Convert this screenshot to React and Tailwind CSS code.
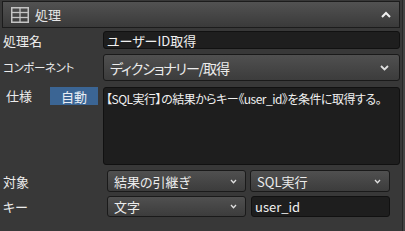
import React from 'react';

const Chevron = ({ small = false }) => (
  <svg width={small ? 7 : 9} height={small ? 5 : 6} viewBox={small ? '0 0 7 5' : '0 0 9 6'}>
    <polyline
      points={small ? '1,1 3.5,3.8 6,1' : '1,1 4.5,4.5 8,1'}
      fill="none"
      stroke="#e0e0e0"
      strokeWidth={small ? 1.3 : 1.8}
    />
  </svg>
);

const Select = ({ children, className = '', small = false }) => (
  <div
    className={`flex items-center justify-between rounded-[3px] border border-[#1a1a1a] bg-gradient-to-b from-[#505050] to-[#3c3c3c] pl-[6px] text-[#ececec] ${className}`}
  >
    <span className="leading-none whitespace-nowrap">{children}</span>
    <Chevron small={small} />
  </div>
);

const App = () => {
  return (
    <div className="w-[405px] h-[231px] overflow-hidden bg-[#444] font-['Noto_Sans_CJK_JP','Noto_Sans',sans-serif] [font-feature-settings:'palt']">
      <div className="w-[403px] h-[231px] bg-[#383838] border-r border-[#262626] flex flex-col">
        {/* Header */}
        <div className="mx-[2px] mt-[1px] h-[27px] border border-[#1c1c1c] bg-gradient-to-b from-[#525252] to-[#3a3a3a] flex items-center pl-[8px] pr-[8px]">
          <svg width="18" height="16" viewBox="0 0 18 16" className="mr-[6px]">
            <rect x="0.75" y="0.75" width="16.5" height="14.5" fill="none" stroke="#c4c4c4" strokeWidth="1.5" />
            <line x1="0.5" y1="5.5" x2="17.5" y2="5.5" stroke="#c4c4c4" strokeWidth="1.3" />
            <line x1="0.5" y1="10.5" x2="17.5" y2="10.5" stroke="#c4c4c4" strokeWidth="1.3" />
            <line x1="9" y1="0.5" x2="9" y2="15.5" stroke="#c4c4c4" strokeWidth="1.3" />
          </svg>
          <span className="text-[13px] text-[#e6e6e6] leading-none">処理</span>
          <svg width="10" height="7" viewBox="0 0 10 7" className="ml-auto">
            <polyline points="1,6 5,2 9,6" fill="none" stroke="#f0f0f0" strokeWidth="2" />
          </svg>
        </div>

        {/* 処理名 */}
        <div className="flex items-center mt-[3px] pl-[3px] h-[18px]">
          <span className="w-[100px] text-[13px] text-[#ececec] leading-none">処理名</span>
          <div className="w-[297px] h-[18px] rounded-[3px] border border-[#111] bg-[#1e1e1e] flex items-center px-[3px] text-[13px] text-[#f0f0f0] leading-none">
            ユーザーID取得
          </div>
        </div>

        {/* コンポーネント */}
        <div className="flex items-center mt-[5px] pl-[3px] h-[27px]">
          <span className="w-[100px] text-[11.5px] tracking-[-0.4px] text-[#ececec] leading-none whitespace-nowrap">コンポーネント</span>
          <Select className="w-[297px] h-[27px] text-[14px] tracking-[-1.1px] pr-[10px]">ディクショナリー/取得</Select>
        </div>

        {/* 仕様 */}
        <div className="flex items-start mt-[6px] pl-[6px] h-[78px]">
          <span className="w-[44px] text-[13px] text-[#ececec] leading-[18px]">仕様</span>
          <div className="w-[48px] h-[18px] bg-[#3b6594] flex items-center justify-center text-[13px] text-[#e8eef5] leading-none">
            自動
          </div>
          <div className="ml-[5px] w-[297px] h-[78px] rounded-[3px] border border-[#111] bg-[#1e1e1e] pl-[2px] pt-[3px] text-[12px] tracking-[-0.5px] text-[#f0f0f0] leading-[16px] whitespace-nowrap overflow-hidden">
            【SQL実行】の結果からキー《user_id》を条件に取得する。
          </div>
        </div>

        {/* 対象 */}
        <div className="flex items-center mt-[5px] pl-[3px] h-[22px]">
          <span className="w-[104px] text-[13px] text-[#ececec] leading-none">対象</span>
          <Select small className="w-[139px] h-[22px] text-[13px] pr-[8px]">結果の引継ぎ</Select>
          <Select small className="ml-[4px] w-[140px] h-[22px] text-[13px] pr-[8px]">SQL実行</Select>
        </div>

        {/* キー */}
        <div className="flex items-center mt-[4px] pl-[3px] h-[21px]">
          <span className="w-[104px] text-[13px] text-[#ececec] leading-none">キー</span>
          <Select small className="w-[139px] h-[21px] text-[13px] pr-[8px]">文字</Select>
          <div className="ml-[5px] w-[139px] h-[21px] rounded-[3px] border border-[#111] bg-[#1e1e1e] flex items-center px-[3px] text-[13px] text-[#f0f0f0] leading-none">
            user_id
          </div>
        </div>
      </div>
    </div>
  );
};

export default App;
